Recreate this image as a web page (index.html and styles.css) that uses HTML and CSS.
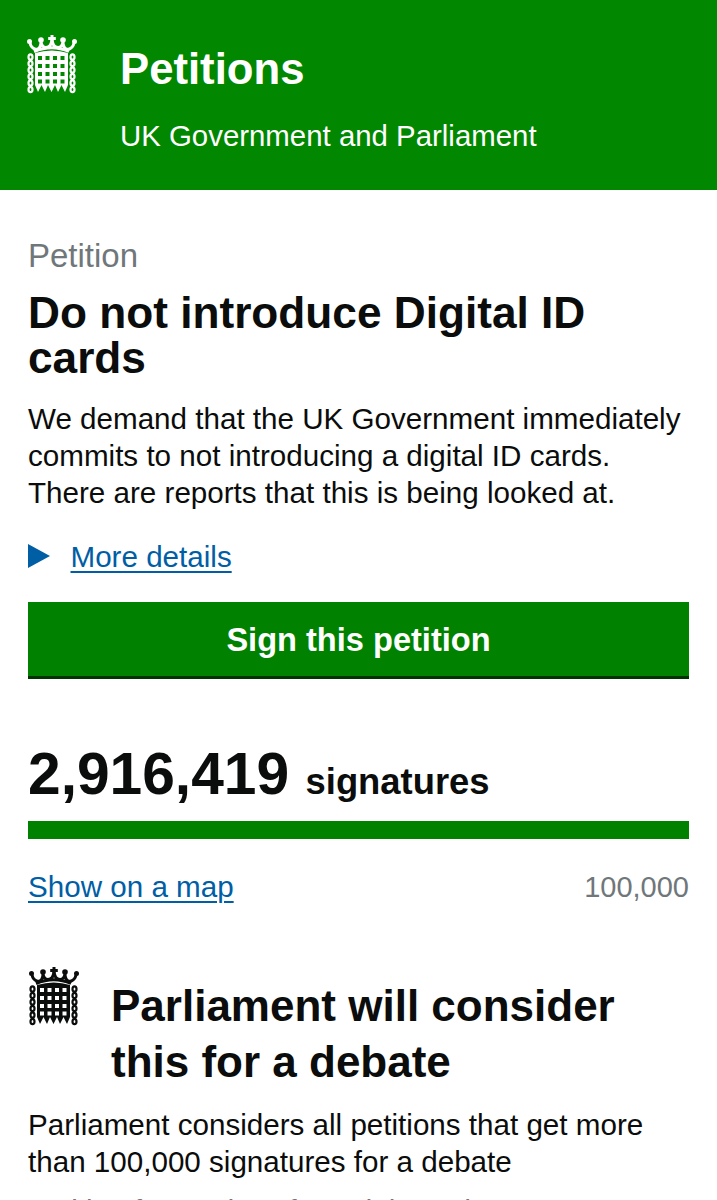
FILE: index.html
```html
<!DOCTYPE html>
<html lang="en">
<head>
<meta charset="utf-8">
<title>Petitions</title>
<link rel="stylesheet" href="styles.css">
</head>
<body>
<svg class="defs" width="0" height="0" aria-hidden="true">
  <symbol id="portcullis" viewBox="0 0 50 60">
    <g fill="none" stroke="currentColor" stroke-width="2.200">
      <path d="M7 16.500Q25 9 42 16.500" stroke-width="3"/>
      <path d="M3 8Q4 13 9 14.500Q14 14 14 7Q15 12.500 19 12.500Q24 12.500 25 5Q26 12.500 31 12.500Q35 12.500 36 7Q36 14 41 14.500Q46 13 47 8" stroke-width="3"/>
      <ellipse cx="3.500" cy="22" rx="2" ry="2.700"/><ellipse cx="3.500" cy="28.500" rx="2" ry="2.700"/><ellipse cx="3.500" cy="35" rx="2" ry="2.700"/><ellipse cx="3.500" cy="41.500" rx="2" ry="2.700"/><ellipse cx="3.500" cy="48" rx="2" ry="2.700"/><ellipse cx="3.500" cy="54.500" rx="2" ry="2.700"/>
      <ellipse cx="45.500" cy="22" rx="2" ry="2.700"/><ellipse cx="45.500" cy="28.500" rx="2" ry="2.700"/><ellipse cx="45.500" cy="35" rx="2" ry="2.700"/><ellipse cx="45.500" cy="41.500" rx="2" ry="2.700"/><ellipse cx="45.500" cy="48" rx="2" ry="2.700"/><ellipse cx="45.500" cy="54.500" rx="2" ry="2.700"/>
    </g>
    <g fill="currentColor">
      <circle cx="2.500" cy="6.500" r="2.500"/><circle cx="47.500" cy="6.500" r="2.500"/>
      <circle cx="14" cy="5" r="2.800"/><circle cx="36" cy="5" r="2.800"/>
      <path d="M23.500 0h3v2h2.300v3h-2.300v4h-3V5h-2.300V2h2.300z"/>
    </g>
    <path fill="currentColor" fill-rule="evenodd" d="M8 18Q25 13 41 18V50L38 57L34.500 50L31 57L28 50L24.500 57L21 50L18 57L14.500 50L11 57L8 50Z
      M11 21h4v4h-4zM18.500 21h4v4h-4zM26 21h4v4h-4zM33.500 21h4v4h-4z
      M11 29h4v4h-4zM18.500 29h4v4h-4zM26 29h4v4h-4zM33.500 29h4v4h-4z
      M11 37h4v4h-4zM18.500 37h4v4h-4zM26 37h4v4h-4zM33.500 37h4v4h-4z
      M11 44.500h4v4h-4zM18.500 44.500h4v4h-4zM26 44.500h4v4h-4zM33.500 44.500h4v4h-4z"/>
  </symbol>
</svg>

<header class="site-header">
  <svg class="logo logo-header" aria-hidden="true"><use href="#portcullis"/></svg>
  <div class="site-titles">
    <div class="site-name">Petitions</div>
    <div class="site-sub">UK Government and Parliament</div>
  </div>
</header>

<main class="content">
  <div class="eyebrow">Petition</div>
  <h1 class="title">Do not introduce Digital ID cards</h1>
  <p class="body-text">We demand that the UK Government immediately commits to not introducing a digital ID cards. There are reports that this is being looked at.</p>

  <div class="details">
    <span class="triangle"></span>
    <a class="link" href="#">More details</a>
  </div>

  <a class="button" href="#">Sign this petition</a>

  <div class="count"><span class="count-number">2,916,419</span> <span class="count-label">signatures</span></div>
  <div class="bar"></div>
  <div class="bar-meta">
    <a class="link" href="#">Show on a map</a>
    <span class="threshold">100,000</span>
  </div>

  <section class="debate">
    <svg class="logo logo-debate" aria-hidden="true"><use href="#portcullis"/></svg>
    <h2 class="debate-title">Parliament will consider this for a debate</h2>
  </section>
  <p class="body-text debate-text">Parliament considers all petitions that get more than 100,000 signatures for a debate</p>
  <p class="waiting">Waiting for 21 days for a debate date</p>
</main>
</body>
</html>
```
FILE: styles.css
```css
* { box-sizing: border-box; }
html, body { margin: 0; height: 1200px; overflow: hidden; }
body {
  background: #fff;
  color: #0b0c0c;
  font-family: "Liberation Sans", Arial, sans-serif;
}
.defs { position: absolute; }
.logo { display: block; flex: none; }

.site-header {
  background: #018700;
  color: #fff;
  height: 190px;
  padding: 35px 28px 0 27px;
  display: flex;
  gap: 43px;
}
.logo-header { width: 50px; height: 60px; }
.site-name { font-size: 43.700px; font-weight: 700; line-height: 48px; margin-top: 10px; }
.site-sub { font-size: 29.400px; line-height: 34px; margin-top: 26px; }

.content { padding: 0 28px; }
.eyebrow { color: #6f777b; font-size: 33px; line-height: 38px; margin-top: 47px; }
.title { font-size: 44.200px; font-weight: 700; line-height: 45px; margin: 15px 0 0; }
.body-text { font-size: 29.600px; line-height: 37px; margin: 0; }
.title + .body-text { margin-top: 20px; }

.details { display: flex; align-items: center; gap: 20.500px; margin-top: 28px; height: 36px; }
.triangle {
  width: 0; height: 0;
  border-left: 22px solid #005ea5;
  border-top: 12.500px solid transparent;
  border-bottom: 12.500px solid transparent;
  margin-top: -3px;
}
.link { color: #005ea5; font-size: 29.600px; text-decoration: underline; text-underline-offset: 4px; text-decoration-thickness: 2px; }

.button {
  display: block;
  margin-top: 27px;
  height: 77px;
  background: #008200;
  border-bottom: 3px solid #003300;
  color: #fff;
  font-size: 32.600px;
  font-weight: 700;
  line-height: 76px;
  text-align: center;
  text-decoration: none;
}

.count { margin-top: 64px; height: 62px; line-height: 62px; white-space: nowrap; }
.count-number { font-size: 58.700px; font-weight: 700; }
.count-label { font-size: 36.400px; font-weight: 700; margin-left: 12px; }
.bar { background: #008200; height: 18px; margin-top: 16px; }
.bar-meta { display: flex; justify-content: space-between; align-items: center; margin-top: 30px; height: 36px; }
.threshold { color: #6f777b; font-size: 29px; }

.debate { display: flex; gap: 31px; margin-top: 50px; }
.logo-debate { width: 52px; height: 60px; margin-top: 12px; }
.debate-title { font-size: 44px; font-weight: 700; line-height: 56px; margin: 23px 0 0; }
.debate-text { margin-top: 16px; }
.waiting { color: #6f777b; font-size: 29.600px; line-height: 37px; margin: 12px 0 0; }
```
